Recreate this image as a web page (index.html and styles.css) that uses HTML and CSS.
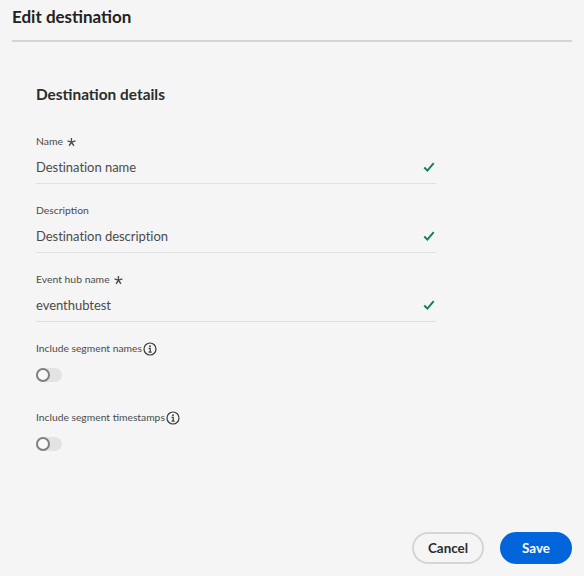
FILE: index.html
```html
<!DOCTYPE html>
<html lang="en">
<head>
<meta charset="utf-8">
<title>Edit destination</title>
<link rel="stylesheet" href="styles.css">
</head>
<body>
<div class="dialog">
  <header class="dialog-header"><h1 class="dialog-title">Edit destination</h1></header>
  <main class="dialog-body">
    <h2 class="section-title">Destination details</h2>
    <div class="field">
      <div class="field-label">Name<svg class="req" viewBox="0 0 10 10"><path d="M4.3 0.8h1.3l-.1 3 2.9-.9.4 1.2-2.9.9 1.8 2.5-1 .8L5 5.8 3.3 8.3l-1-.8 1.8-2.5-2.9-.9.4-1.2 2.8.9z"/></svg></div>
      <div class="field-input"><span>Destination name</span><svg class="check" viewBox="0 0 12 12"><path d="M1.3 6.5 4.4 9.6 10.7 2.2"/></svg></div>
    </div>
    <div class="field">
      <div class="field-label">Description</div>
      <div class="field-input"><span>Destination description</span><svg class="check" viewBox="0 0 12 12"><path d="M1.3 6.5 4.4 9.6 10.7 2.2"/></svg></div>
    </div>
    <div class="field">
      <div class="field-label">Event hub name<svg class="req" viewBox="0 0 10 10"><path d="M4.3 0.8h1.3l-.1 3 2.9-.9.4 1.2-2.9.9 1.8 2.5-1 .8L5 5.8 3.3 8.3l-1-.8 1.8-2.5-2.9-.9.4-1.2 2.8.9z"/></svg></div>
      <div class="field-input"><span>eventhubtest</span><svg class="check" viewBox="0 0 12 12"><path d="M1.3 6.5 4.4 9.6 10.7 2.2"/></svg></div>
    </div>
    <div class="switch-field">
      <div class="switch-label">Include segment names<svg class="info" viewBox="0 0 14 14"><circle cx="7" cy="7" r="6"/><circle class="dot" cx="7" cy="4.2" r=".9"/><path d="M5.6 6.3H7.2V10M5.6 10.2H8.6"/></svg></div>
      <div class="switch"><span class="switch-knob"></span></div>
    </div>
    <div class="switch-field">
      <div class="switch-label">Include segment timestamps<svg class="info" viewBox="0 0 14 14"><circle cx="7" cy="7" r="6"/><circle class="dot" cx="7" cy="4.2" r=".9"/><path d="M5.6 6.3H7.2V10M5.6 10.2H8.6"/></svg></div>
      <div class="switch"><span class="switch-knob"></span></div>
    </div>
  </main>
  <footer class="dialog-footer">
    <button class="btn btn-secondary" type="button">Cancel</button>
    <button class="btn btn-primary" type="button">Save</button>
  </footer>
</div>
</body>
</html>
```
FILE: styles.css
```css
* { box-sizing: border-box; }
html, body { margin: 0; height: 100%; }
body { background: #f5f5f5; font-family: "Lato", "Noto Sans", sans-serif; color: #2c2c2c; overflow: hidden; }
.dialog { width: 584px; height: 576px; padding: 0 12px; display: flex; flex-direction: column; }
.dialog-header { height: 42px; border-bottom: 2px solid #d5d5d5; }
.dialog-title { margin: 0; padding-top: 6px; font-size: 17px; line-height: 22px; font-weight: 700; color: #222; }
.dialog-body { flex: 1; padding: 42px 24px 0; }
.section-title { margin: 0 0 27px; font-size: 15.4px; line-height: 21px; font-weight: 700; color: #2c2c2c; }
.field { width: 400px; height: 69px; }
.field-label { height: 20px; padding-bottom: 2px; display: flex; align-items: center; font-size: 10.4px; color: #4b4b4b; }
.req { width: 11px; height: 11px; margin: 3px 0 0 3px; fill: #4b4b4b; }
.field-input { height: 32px; display: flex; align-items: center; justify-content: space-between; border-bottom: 1px solid #e1e1e1; font-size: 13px; letter-spacing: -0.04px; color: #4b4b4b; padding-right: 1px; padding-bottom: 2px; }
.check { width: 12px; height: 12px; fill: none; stroke: #12805c; stroke-width: 2; }
.switch-field { height: 69px; }
.switch-label { height: 20px; padding-bottom: 2px; display: flex; align-items: center; font-size: 10.3px; color: #4b4b4b; }
.info { width: 14px; height: 14px; margin: 2px 0 0 1px; fill: none; stroke: #3a3a3a; stroke-width: 1.2; }
.info .dot { fill: #3a3a3a; stroke: none; }
.switch { width: 26px; height: 14px; margin-top: 9px; border-radius: 7px; background: #e3e3e3; }
.switch-knob { display: block; width: 14px; height: 14px; border-radius: 50%; background: #f8f8f8; border: 2px solid #808080; }
.dialog-footer { display: flex; justify-content: flex-end; gap: 16px; padding-bottom: 12px; }
.btn { width: 72px; height: 32px; border-radius: 16px; font-family: inherit; font-size: 13.4px; font-weight: 700; padding: 0 0 1px; }
.btn-secondary { background: #f5f5f5; border: 2px solid #d5d5d5; color: #2c2c2c; }
.btn-primary { background: #0265dc; border: 2px solid #0265dc; color: #fff; }
```
